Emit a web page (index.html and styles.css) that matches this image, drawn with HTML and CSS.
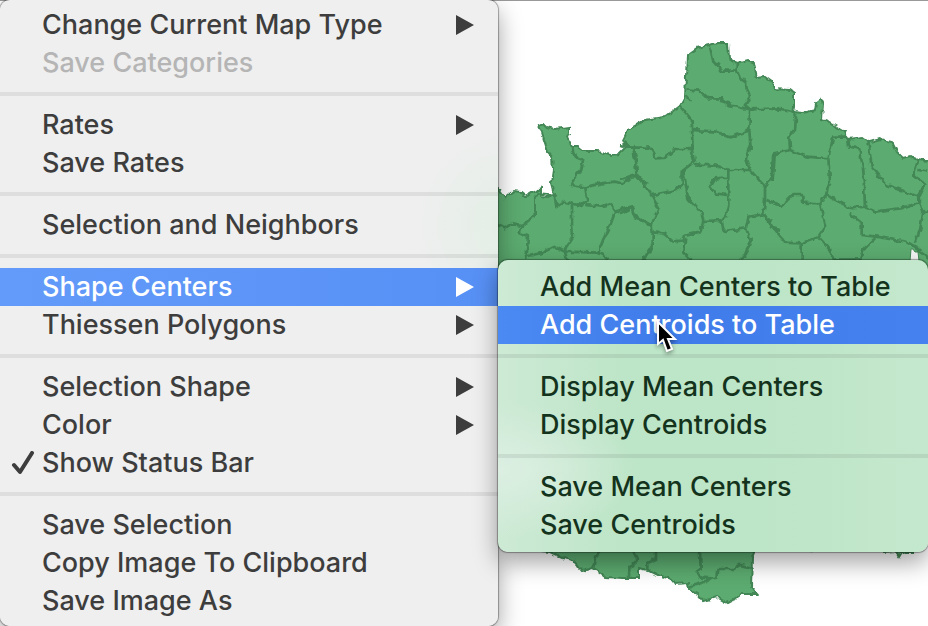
FILE: index.html
```html
<!DOCTYPE html>
<html lang="en">
<head>
<meta charset="utf-8">
<meta name="viewport" content="width=device-width, initial-scale=1">
<title>Map options</title>
<link rel="stylesheet" href="styles.css">
</head>
<body>
<main class="workspace">
  <svg class="map" width="928" height="626" viewBox="0 0 928 626" role="img" aria-label="Map of departments">
    <defs>
      <filter id="rough" x="0" y="0" width="928" height="626" filterUnits="userSpaceOnUse">
        <feTurbulence type="fractalNoise" baseFrequency="0.2" numOctaves="1" seed="4"/>
        <feDisplacementMap in="SourceGraphic" scale="6" xChannelSelector="R" yChannelSelector="G"/>
      </filter>
    </defs>
    <g filter="url(#rough)">
      <path class="land" d="M480 186L498 188 505 198 513 191 521 192 526 196 531 193 541 189 541 196 548 197 554 194 551 183 553 170 552 157 548 152 544 140 541 130 539 126 543 124 546 127 555 129 569 127 569 133 567 138 572 147 578 147 583 151 598 151 610 155 619 154 626 147 623 140 628 130 645 120 665 117 680 106 685 97 687 55 697 48 717 43 728 43 729 58 737 64 748 61 754 63 757 78 765 77 772 82 774 89 790 90 794 93 794 107 793 112 803 113 815 110 816 103 821 99 823 103 822 120 830 123 845 132 848 139 863 137 870 142 880 139 892 142 897 152 903 158 910 156 917 160 940 160V540H914L912 553H906L902 552 899 557 895 552 884 553 880 548 755 550 752 558 751 587 757 594 742 594 733 600 727 603 717 597 703 601 697 594 689 590 688 583 676 584 672 579 660 576 648 570 639 568 639 578 623 578 605 577 593 568 582 571 573 560 563 558 550 552 540 551 500 400 480 300Z"/>
      <g class="border" transform="translate(498 90) scale(.33333)">
        <path d="M222 172L230 200 255 210 250 240 230 262 220 285 262 292 268 335 240 345 200 335 175 350 170 315M262 292L310 280 350 275 375 280 400 262 418 262 412 200 405 170 385 170M418 262L450 285M222 340V400L225 440 205 470 200 485M262 345L310 350 335 340 350 365 400 350 415 380 450 400M350 370L335 410 315 450 300 490M80 500L130 490 170 470 200 485 300 488 330 505M170 315L120 310 110 330V380L70 408 40 402 20 415 0 405M70 408L65 430 90 440 85 510M200 485L210 515"/>
      </g>
      <g class="border" transform="translate(620 30) scale(.33333)">
        <path d="M270 50L280 95 305 122H350V103M350 122L360 145 378 155 380 180 392 200 375 225 390 238 480 235M200 178L240 182 265 205 300 205 325 225 360 232 390 238 388 300 392 360M200 200L210 212M180 228L215 270 218 360M220 300L290 305 330 322 385 302M290 95L300 105M300 212L335 222"/>
      </g>
      <g class="border" transform="translate(620 145) scale(.33333)">
        <path d="M40 0L50 90 0 102M50 90L95 150 115 190 95 240 45 220 35 188 0 205M95 240L98 262 130 265 160 290 195 285 190 320 215 345M98 262V300L70 345M0 0L50 8 90 8 110 40 135 38 165 12 215 12 222 50 185 80 185 120 170 135 98 150M222 58L290 62 325 75V180L318 210 305 225 250 228 245 205 205 160 190 80M322 98L285 100 270 125 285 145 320 150M325 75H390L378 40 390 0M390 75L435 125V165L430 208 385 215 378 250 310 258 305 225M250 228L240 262 195 272 190 290M378 250L392 285 375 330 360 345M435 125L455 95 460 30 480 22M440 165L480 182M430 208L460 250 480 255M218 0V12"/>
      </g>
      <g class="border" transform="translate(770 70) scale(.33333)">
        <path d="M0 115L65 125 78 140 75 180 58 200 60 240 15 250 8 330M60 240L110 260 175 265 190 200 225 200 235 207M175 265L180 330 168 375 245 415 285 410 280 300 268 235 237 230 235 205M295 215L305 290 350 345 445 380 465 340 430 315 445 270M445 300L474 305M445 380V400L390 415 315 425 285 410M168 375L150 400 100 398 95 372 70 372 35 408 0 395M150 400L165 470 145 500 95 520 45 518 5 470 0 445M95 520V568M145 500L180 540 190 568H270L280 540 320 500M240 430L275 460V495L320 500 375 510 410 515 435 530 490 575M445 380L460 425 450 480 435 520M460 425H490M440 268L500 275"/>
      </g>
      <g class="border" transform="translate(530 535) scale(.33333)">
        <path d="M190 98L195 70 208 48M310 48L322 75 298 98 297 130M352 105V85L378 72V48M510 48L512 100 500 108 510 128 545 130 562 128 565 102 612 102 630 90 663 98M545 130L515 145 478 155"/>
      </g>
    </g>
    <path class="hole" d="M911 249l2 0 2 3 3 0 1 9H910z"/>
  </svg>

  <div class="menu menu-main" role="menu" aria-label="Options">
    <button class="item" role="menuitem">Change Current Map Type<svg class="arrow" viewBox="0 0 18 20"><path d="M0 0L18 10 0 20z"/></svg></button>
    <button class="item" role="menuitem" disabled>Save Categories</button>
    <hr class="rule">
    <button class="item" role="menuitem">Rates<svg class="arrow" viewBox="0 0 18 20"><path d="M0 0L18 10 0 20z"/></svg></button>
    <button class="item" role="menuitem">Save Rates</button>
    <hr class="rule">
    <button class="item" role="menuitem">Selection and Neighbors</button>
    <hr class="rule">
    <button class="item open" role="menuitem" aria-expanded="true">Shape Centers<svg class="arrow" viewBox="0 0 18 20"><path d="M0 0L18 10 0 20z"/></svg></button>
    <button class="item" role="menuitem">Thiessen Polygons<svg class="arrow" viewBox="0 0 18 20"><path d="M0 0L18 10 0 20z"/></svg></button>
    <hr class="rule">
    <button class="item" role="menuitem">Selection Shape<svg class="arrow" viewBox="0 0 18 20"><path d="M0 0L18 10 0 20z"/></svg></button>
    <button class="item" role="menuitem">Color<svg class="arrow" viewBox="0 0 18 20"><path d="M0 0L18 10 0 20z"/></svg></button>
    <button class="item" role="menuitemcheckbox" aria-checked="true"><svg class="check" viewBox="0 0 24 24"><path d="M3 14l6 7L21 2"/></svg>Show Status Bar</button>
    <hr class="rule">
    <button class="item" role="menuitem">Save Selection</button>
    <button class="item" role="menuitem">Copy Image To Clipboard</button>
    <button class="item" role="menuitem">Save Image As</button>
  </div>

  <div class="menu menu-sub" role="menu" aria-label="Shape Centers">
    <button class="item" role="menuitem">Add Mean Centers to Table</button>
    <button class="item hover" role="menuitem">Add Centroids to Table<svg class="pointer" viewBox="0 0 24 38"><path d="M3 5V27l5-4 4 11 5-2-4-10h7z"/></svg></button>
    <hr class="rule">
    <button class="item" role="menuitem">Display Mean Centers</button>
    <button class="item" role="menuitem">Display Centroids</button>
    <hr class="rule">
    <button class="item" role="menuitem">Save Mean Centers</button>
    <button class="item" role="menuitem">Save Centroids</button>
  </div>
</main>
</body>
</html>
```
FILE: styles.css
```css
* { box-sizing: border-box; }

body {
  margin: 0;
  background: #fff;
  font-family: Inter, "Liberation Sans", sans-serif;
}

.workspace {
  position: relative;
  display: grid;
  grid-template-columns: 498fr 430fr;
  align-items: start;
  min-height: 100vh;
  overflow: hidden;
  box-shadow: inset 0 1px #999;
}

.map {
  position: absolute;
  top: 0;
  left: 0;
}

.land {
  fill: #5cab70;
  stroke: #438755;
  stroke-width: 2;
}

.border {
  fill: none;
  stroke: #438755;
  stroke-width: 8;
}

.hole {
  fill: #f4f4f4;
  stroke: #438755;
}

.menu {
  position: relative;
  border-radius: 10px;
}

.menu-main {
  padding: 6px 0;
  color: #3d3d3d;
  background: radial-gradient(circle at 510px 225px, #e2eee5, #efefef 100px);
  box-shadow: 0 0 1px 1px #00000055, 0 10px 24px #00000060;
}

.menu-sub {
  margin-top: 260px;
  padding: 8px 0;
  color: #14331d;
  background:
    radial-gradient(ellipse at 0 210px, #dcefe2, #dcefe200 140px),
    linear-gradient(90deg, #cdead5, #bde5c7 30%, #bde5c7 60%, #c4e8cd);
  box-shadow: 0 0 1px 1px #00000055, 0 10px 24px #00000060;
}

.item {
  position: relative;
  display: flex;
  align-items: center;
  width: 100%;
  height: 38px;
  padding: 0 24px 0 42px;
  border: 0;
  background: none;
  color: inherit;
  font: inherit;
  font-size: 27px;
  font-weight: 500;
  line-height: 38px;
  text-align: left;
  white-space: nowrap;
}

.item:disabled { color: #b5b5b5; }

.item.open {
  color: #fff;
  background: linear-gradient(90deg, #629bf9, #5790f5);
}

.item.hover {
  z-index: 1;
  color: #fff;
  background: linear-gradient(90deg, #4b89f3, #3f7cea 40%, #4682ef);
}

.rule {
  height: 4px;
  margin: 10px 0;
  border: 0;
  background: #00000012;
}

.arrow {
  width: 18px;
  height: 20px;
  margin-left: auto;
  fill: currentColor;
}

.check {
  position: absolute;
  left: 11px;
  width: 24px;
  height: 24px;
  fill: none;
  stroke: currentColor;
  stroke-width: 4;
  stroke-linecap: round;
  stroke-linejoin: round;
}

.pointer {
  position: absolute;
  top: 11px;
  left: 157px;
  width: 24px;
  height: 38px;
  fill: #000;
  stroke: #fff;
  stroke-width: 2;
  filter: drop-shadow(0 2px 2px #00000066);
}

.menu-sub .item { padding-right: 0; }
```
